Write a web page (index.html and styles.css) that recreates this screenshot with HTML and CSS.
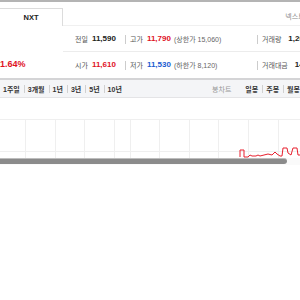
FILE: index.html
```html
<!DOCTYPE html>
<html lang="ko">
<head>
    <meta charset="UTF-8">
    <meta name="viewport" content="width=device-width, initial-scale=1.0">
    <title>시세</title>
    <link rel="stylesheet" href="styles.css">
</head>
<body>
    <div class="page">
        <div class="topbar"></div>

        <!-- 거래소 탭 -->
        <div class="tabs">
            <div class="tab active">NXT</div>
            <div class="market">넥스트레이드</div>
        </div>

        <!-- 시세 요약 -->
        <div class="quote">
            <div class="rate up">1.64%</div>
            <div class="rows">
                <div class="row">
                    <div class="cell c1"><span class="lbl">전일</span><b class="num">11,590</b></div>
                    <div class="cell c2"><span class="lbl">고가</span><b class="num up">11,790</b><span class="sub">(상한가 15,060)</span></div>
                    <div class="cell c3"><span class="lbl">거래량</span><b class="num">1,204,311</b></div>
                </div>
                <div class="row">
                    <div class="cell c1"><span class="lbl">시가</span><b class="num up">11,610</b></div>
                    <div class="cell c2"><span class="lbl">저가</span><b class="num down">11,530</b><span class="sub">(하한가 8,120)</span></div>
                    <div class="cell c3"><span class="lbl">거래대금</span><b class="num">14,012</b></div>
                </div>
            </div>
        </div>

        <!-- 기간 선택 -->
        <div class="toolbar">
            <ul class="periods">
                <li>1주일</li>
                <li>3개월</li>
                <li>1년</li>
                <li>3년</li>
                <li>5년</li>
                <li>10년</li>
            </ul>
            <ul class="kinds">
                <li class="muted">봉차트</li>
                <li>일봉</li>
                <li>주봉</li>
                <li>월봉</li>
            </ul>
        </div>

        <!-- 차트 -->
        <svg class="chart" width="300" height="60" viewBox="0 0 300 60">
            <g stroke="#efefef" stroke-width="1">
                <line x1="0" y1="21.5" x2="300" y2="21.5"/>
                <line x1="0" y1="53.5" x2="300" y2="53.5"/>
                <line x1="25.5" y1="21" x2="25.5" y2="60"/>
                <line x1="55.5" y1="21" x2="55.5" y2="60"/>
                <line x1="84.5" y1="21" x2="84.5" y2="60"/>
                <line x1="114.5" y1="21" x2="114.5" y2="60"/>
                <line x1="130.5" y1="21" x2="130.5" y2="60"/>
                <line x1="159.5" y1="21" x2="159.5" y2="60"/>
                <line x1="189.5" y1="21" x2="189.5" y2="60"/>
                <line x1="218.5" y1="21" x2="218.5" y2="60"/>
                <line x1="248.5" y1="21" x2="248.5" y2="60"/>
                <line x1="278.5" y1="21" x2="278.5" y2="60"/>
            </g>
            <polyline fill="none" stroke="#e8202e" stroke-width="1"
                points="240,59 240,52 244,52 244,59 248,59 250,57 252,58 256,58 258,57 260,58 264,57 268,56 272,57 275,54 277,56 280,58 282,58 283,50 287,50 288,55 291,57 293,50 297,50 298,57 300,57"/>
        </svg>
        <div class="scroll"><div class="thumb"></div></div>
    </div>
</body>
</html>
```

FILE: styles.css
```css
html, body {
    margin: 0;
    padding: 0;
    background: #fff;
    overflow: hidden;
}

body {
    font-family: "Liberation Sans", "Noto Sans CJK KR", sans-serif;
    font-size: 7px;
    color: #333;
}

.page {
    width: 300px;
    overflow: hidden;
    white-space: nowrap;
}

.topbar {
    height: 2px;
    background: #b4b4b4;
}

.tabs {
    display: flex;
    align-items: flex-end;
    height: 23px;
    border-bottom: 1px solid #f0f0f0;
}

.tab {
    width: 62px;
    height: 17px;
    line-height: 17px;
    text-align: center;
    font-size: 7.5px;
    font-weight: bold;
    color: #222;
    border-top: 1px solid #dcdcdc;
    border-right: 1px solid #dcdcdc;
    background: #fff;
    margin-bottom: -1px;
}

.market {
    margin-left: auto;
    margin-right: -24px;
    align-self: center;
    margin-top: 4px;
    color: #888;
}

.quote {
    display: flex;
    height: 52px;
}

.rate {
    width: 63px;
    flex: none;
    align-self: flex-end;
    padding-bottom: 9px;
    font-size: 9px;
    font-weight: bold;
}

.rows {
    flex: 1;
    display: flex;
    flex-direction: column;
}

.row {
    display: flex;
    align-items: center;
    height: 25px;
}

.row + .row {
    border-top: 1px solid #ececec;
}

.cell {
    display: flex;
    align-items: center;
    gap: 4px;
}

.c1 {
    width: 62px;
    padding-left: 12px;
    box-sizing: border-box;
}

.c2, .c3 {
    position: relative;
    padding-left: 5px;
}

.c2 {
    width: 132px;
    box-sizing: border-box;
}

.c3 {
    gap: 7px;
}

.c2::before, .c3::before {
    content: "";
    position: absolute;
    left: 0;
    top: 1px;
    width: 1px;
    height: 9px;
    background: #ccc;
}

.lbl {
    color: #555;
}

.num {
    font-size: 8px;
    color: #222;
}

.sub {
    margin-left: -1px;
    color: #666;
}

.up {
    color: #e0121f;
}

.down {
    color: #1a5bd0;
}

.toolbar {
    display: flex;
    justify-content: space-between;
    align-items: center;
    height: 17px;
    background: #f4f5f7;
    border-top: 2px solid #d4d4d6;
    border-bottom: 1px solid #e4e4e6;
}

.periods, .kinds {
    display: flex;
    margin: 0;
    padding: 0;
    list-style: none;
}

.periods li, .kinds li {
    position: relative;
    padding: 0 4px;
    color: #333;
    font-weight: bold;
}

.periods li:first-child {
    padding-left: 3px;
}

.periods li + li::before, .kinds li + li::before {
    content: "";
    position: absolute;
    left: 0;
    top: 1px;
    width: 1px;
    height: 8px;
    background: #d0d0d0;
}

.kinds {
    margin-right: -4px;
}

.kinds li.muted {
    color: #999;
    font-weight: normal;
    margin-right: 6px;
}

.kinds li.muted + li::before {
    display: none;
}

.chart {
    display: block;
}

.scroll {
    height: 7px;
    background: #fafafa;
}

.thumb {
    width: 287px;
    height: 5px;
    background: #8b8b8b;
    border-top: 1px solid #bdbdbd;
    border-radius: 0 3px 3px 0;
}
```
